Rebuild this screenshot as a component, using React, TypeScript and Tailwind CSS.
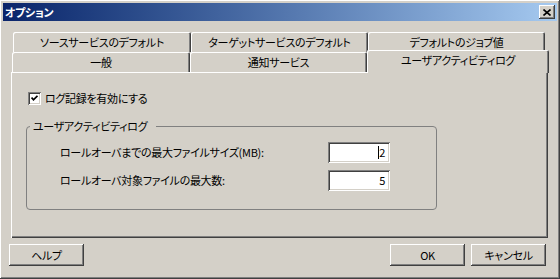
const raised =
  "shadow-[inset_-1px_-1px_#404040,inset_1px_1px_#ffffff,inset_-2px_-2px_#808080,inset_2px_2px_#d4d0c8]";
const sunken =
  "shadow-[inset_1px_1px_#808080,inset_-1px_-1px_#ffffff,inset_2px_2px_#404040,inset_-2px_-2px_#d4d0c8]";

function Tab({ label, width, selected = false }: { label: string; width: number; selected?: boolean }) {
  return (
    <div
      style={{ width }}
      className={
        "flex shrink-0 items-center justify-center rounded-t-[2px] bg-[#d4d0c8] text-black shadow-[inset_1px_1px_#ffffff,inset_-1px_0_#404040,inset_-2px_0_#808080] " +
        (selected ? "relative z-10 -mt-[2px] h-[23px] pb-[3px]" : "h-[20px]")
      }
    >
      {label}
    </div>
  );
}

function Button({ label }: { label: string }) {
  return (
    <button
      type="button"
      className={`flex h-[22px] w-[75px] items-center justify-center bg-[#d4d0c8] text-black ${raised}`}
    >
      {label}
    </button>
  );
}

function NumberField({ value, caret = false }: { value: string; caret?: boolean }) {
  return (
    <div className={`flex h-[21px] w-[62px] items-center justify-end bg-white pr-[5px] text-black ${sunken}`}>
      {caret && <span className="h-[13px] w-[1px] bg-black" />}
      <span>{value}</span>
    </div>
  );
}

export default function App() {
  return (
    <div
      className={`flex h-[279px] w-[560px] flex-col bg-[#d4d0c8] p-[3px] font-['Noto_Sans_CJK_JP','Liberation_Sans',sans-serif] text-[11px] leading-none tracking-[-0.3px] [font-feature-settings:'palt'] ${raised}`}
    >
      <div className="flex h-[18px] shrink-0 items-center justify-between bg-gradient-to-r from-[#0a246a] to-[#a6caf0] pl-[2px] pr-[2px]">
        <span className="text-[11px] font-bold text-white">オプション</span>
        <button type="button" className={`flex h-[14px] w-[16px] items-center justify-center bg-[#d4d0c8] ${raised}`}>
          <svg width="8" height="7" viewBox="0 0 8 7">
            <path d="M0.5 0.5 L7.5 6.5 M7.5 0.5 L0.5 6.5" stroke="#000" strokeWidth="1.6" />
          </svg>
        </button>
      </div>

      <div className="mt-[11px] ml-[10px] flex">
        <Tab label="ソースサービスのデフォルト" width={178} />
        <Tab label="ターゲットサービスのデフォルト" width={177} />
        <Tab label="デフォルトのジョブ値" width={177} />
      </div>
      <div className="ml-[9px] flex items-start">
        <Tab label="一般" width={178} />
        <Tab label="通知サービス" width={177} />
        <Tab label="ユーザアクティビティログ" width={182} selected />
      </div>

      <div className="ml-[8px] h-[166px] w-[537px] shrink-0 -mt-[1px] pt-[20px] pl-[17px] shadow-[inset_1px_1px_#ffffff,inset_-1px_-1px_#404040,inset_-2px_-2px_#808080]">
        <label className="flex items-center gap-[4px] text-black">
          <span className={`flex h-[13px] w-[13px] items-center justify-center bg-white ${sunken}`}>
            <svg width="7" height="7" viewBox="0 0 7 7">
              <path d="M0.5 2.5 L2.5 4.8 L6.5 0.8" fill="none" stroke="#000" strokeWidth="1.8" />
            </svg>
          </span>
          ログ記録を有効にする
        </label>

        <div className="relative mt-[21px] -ml-[2px] h-[84px] w-[411px] rounded-[4px] border border-[#808080] pt-[15px] pl-[33px]">
          <span className="absolute -top-[8px] left-[3px] bg-[#d4d0c8] pl-[3px] pr-[9px] leading-[14px] text-black">
            ユーザアクティビティログ
          </span>
          <div className="grid grid-cols-[268px_62px] items-center gap-y-[7px] text-black">
            <span>ロールオーバまでの最大ファイルサイズ(MB):</span>
            <NumberField value="2" caret />
            <span>ロールオーバ対象ファイルの最大数:</span>
            <NumberField value="5" />
          </div>
        </div>
      </div>

      <div className="mt-[6px] flex pl-[6px] pr-[11px]">
        <Button label="ヘルプ" />
        <div className="ml-auto flex gap-[6px]">
          <Button label="OK" />
          <Button label="キャンセル" />
        </div>
      </div>
    </div>
  );
}
